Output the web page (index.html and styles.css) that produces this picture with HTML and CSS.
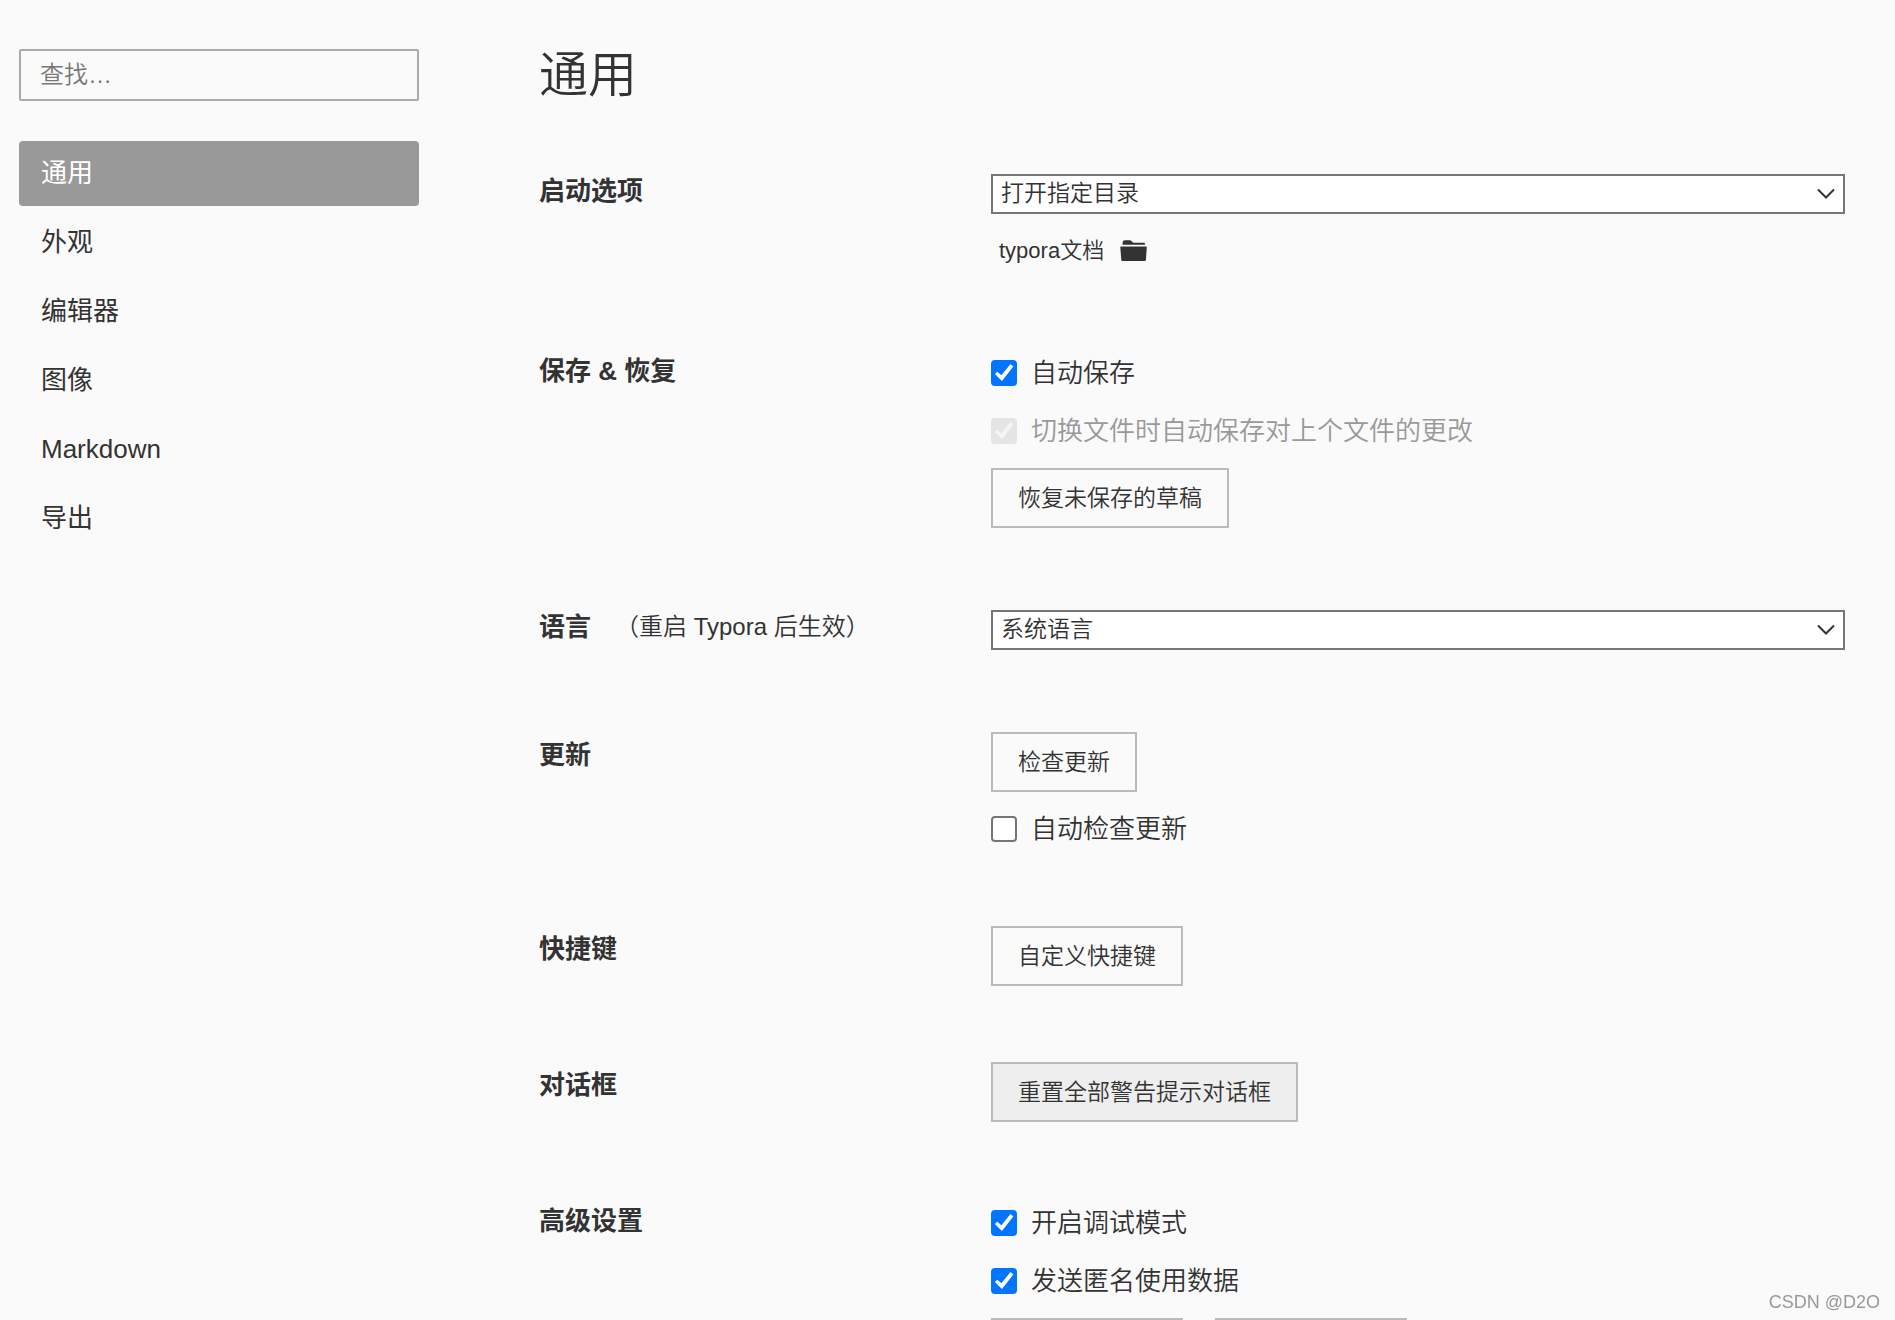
FILE: index.html
```html
<!DOCTYPE html>
<html lang="zh-CN">
<head>
<meta charset="utf-8">
<meta name="viewport" content="width=device-width, initial-scale=1">
<title>通用</title>
<link rel="stylesheet" href="styles.css">
</head>
<body>
<div class="app">
  <aside class="sidebar">
    <input class="search" type="search" placeholder="查找…" aria-label="查找">
    <nav class="nav">
      <a class="nav-item active" href="#general" aria-current="page">通用</a>
      <a class="nav-item" href="#appearance">外观</a>
      <a class="nav-item" href="#editor">编辑器</a>
      <a class="nav-item" href="#image">图像</a>
      <a class="nav-item" href="#markdown">Markdown</a>
      <a class="nav-item" href="#export">导出</a>
    </nav>
  </aside>
  <main class="content" id="general">
    <h1 class="title">通用</h1>

    <section class="row">
      <h2 class="label"><label for="launch">启动选项</label></h2>
      <div class="controls">
        <div class="select-box">
          <select class="select" id="launch"><option>打开指定目录</option></select>
          <svg class="chevron" viewBox="0 0 18 11" aria-hidden="true"><path d="M1 1.5l8 8 8-8"/></svg>
        </div>
        <div class="folder">
          <span>typora文档</span>
          <button class="folder-button" type="button" aria-label="选择目录">
            <svg class="folder-icon" viewBox="0 0 27 21" aria-hidden="true"><path d="M2.600 4.800V2.400C2.800.9 3.600.2 5 .2h4.200c1.200 0 2 .4 2.700 1.200.7.900 1.400 1.400 2.600 1.400h8.800c1.200 0 1.800.6 1.800 2zM1 6.500h25c.5 0 .8.3.8.8l-.9 12.700c-.1.600-.4.900-1 .9H2.300c-.6 0-.9-.3-1-.9L.3 7.300c0-.5.2-.8.7-.8z"/></svg>
          </button>
        </div>
      </div>
    </section>

    <section class="row">
      <h2 class="label">保存 &amp; 恢复</h2>
      <div class="controls">
        <label class="check"><input class="box" type="checkbox" checked>自动保存</label>
        <label class="check disabled"><input class="box" type="checkbox" checked disabled>切换文件时自动保存对上个文件的更改</label>
        <div class="buttons"><button class="button" type="button">恢复未保存的草稿</button></div>
      </div>
    </section>

    <section class="row">
      <h2 class="label"><label for="language">语言</label><span class="note">（重启 Typora 后生效）</span></h2>
      <div class="controls">
        <div class="select-box">
          <select class="select" id="language"><option>系统语言</option></select>
          <svg class="chevron" viewBox="0 0 18 11" aria-hidden="true"><path d="M1 1.5l8 8 8-8"/></svg>
        </div>
      </div>
    </section>

    <section class="row">
      <h2 class="label">更新</h2>
      <div class="controls">
        <div class="buttons"><button class="button" type="button">检查更新</button></div>
        <label class="check"><input class="box" type="checkbox">自动检查更新</label>
      </div>
    </section>

    <section class="row">
      <h2 class="label">快捷键</h2>
      <div class="controls">
        <div class="buttons"><button class="button" type="button">自定义快捷键</button></div>
      </div>
    </section>

    <section class="row">
      <h2 class="label">对话框</h2>
      <div class="controls">
        <div class="buttons"><button class="button pressed" type="button">重置全部警告提示对话框</button></div>
      </div>
    </section>

    <section class="row">
      <h2 class="label">高级设置</h2>
      <div class="controls">
        <label class="check"><input class="box" type="checkbox" checked>开启调试模式</label>
        <label class="check"><input class="box" type="checkbox" checked>发送匿名使用数据</label>
        <div class="buttons">
          <button class="button wide" type="button" aria-label="打开高级设置"></button>
          <button class="button wide" type="button" aria-label="重置高级设置"></button>
        </div>
      </div>
    </section>
  </main>
</div>
<div class="watermark">CSDN @D2O</div>
</body>
</html>
```

FILE: styles.css
```css
* {
  box-sizing: border-box;
}

body {
  margin: 0;
  background: #fafafa;
  color: #333;
  font-family: "Liberation Sans", "Noto Sans CJK SC", sans-serif;
  font-size: 26px;
  line-height: 38px;
}

input,
select,
button {
  font-family: inherit;
  color: inherit;
}

.app {
  display: flex;
  height: 100vh;
  overflow: hidden;
}

/* Sidebar */
.sidebar {
  flex: none;
  width: 419px;
  padding: 49px 0 0 19px;
}

.search {
  display: block;
  width: 100%;
  height: 52px;
  padding: 0 19px;
  border: 2px solid #aaa;
  border-radius: 2px;
  background: transparent;
  font-size: 24px;
  font-weight: 350;
  appearance: none;
}

.search::placeholder {
  color: #777;
}

.nav {
  display: flex;
  flex-direction: column;
  gap: 4px;
  margin-top: 40px;
}

.nav-item {
  padding: 13px 22px 14px;
  border-radius: 4px;
  color: inherit;
  text-decoration: none;
}

.nav-item.active {
  background: #999;
  color: #fff;
}

/* Settings */
.content {
  flex: 1;
  min-width: 0;
  padding: 40px 50px 40px 120px;
  overflow-y: auto;
  scrollbar-width: none;
}

.title {
  margin: 0 0 54px;
  font-size: 49px;
  font-weight: 350;
  line-height: 70px;
}

.row {
  display: grid;
  grid-template-columns: 452px 1fr;
  margin-bottom: 64px;
}

.label {
  display: flex;
  align-self: start;
  gap: 24px;
  margin: 0;
  padding-top: 8px;
  font-size: 26px;
  font-weight: 700;
}

.note {
  font-size: 24px;
  font-weight: 350;
}

.controls {
  font-weight: 350;
}

.select-box {
  position: relative;
  margin: 10px 0 14px;
}

.select {
  display: block;
  width: 100%;
  height: 40px;
  padding: 0 40px 2px 8px;
  border: 2px solid #767676;
  border-radius: 0;
  background: #fff;
  font-size: 23px;
  font-weight: 350;
  appearance: none;
}

.chevron {
  position: absolute;
  top: 14px;
  right: 10px;
  width: 18px;
  height: 11px;
  fill: none;
  stroke: #333;
  stroke-width: 2;
  pointer-events: none;
}

.folder {
  display: flex;
  align-items: center;
  gap: 16px;
  height: 46px;
  margin-bottom: 6px;
  padding-left: 8px;
  font-size: 22px;
}

.folder-button {
  padding: 0 0 2px;
  border: 0;
  background: none;
}

.folder-icon {
  display: block;
  width: 27px;
  height: 21px;
  fill: #333;
}

.check {
  display: flex;
  align-items: center;
  gap: 14px;
  height: 58px;
}

.check.disabled {
  color: #999;
}

.box {
  flex: none;
  width: 26px;
  height: 26px;
  margin: 0;
  border: 2px solid #767676;
  border-radius: 4px;
  background: #fff;
  appearance: none;
}

.box:checked {
  border: 0;
  background: #0075ff;
}

.box:checked::before {
  content: "";
  display: block;
  width: 26px;
  height: 26px;
  background: #fff;
  clip-path: polygon(15% 54%, 24% 45%, 40% 59%, 75% 15%, 86% 25%, 42% 81%);
}

.box:checked:disabled {
  background: #e5e5e5;
}

.box:checked:disabled::before {
  background: #f5f5f5;
}

.buttons {
  display: flex;
  gap: 32px;
  margin: 4px 0 8px;
}

.check + .buttons {
  margin-top: 8px;
}

.button {
  height: 60px;
  padding: 0 25px 4px;
  border: 2px solid #bbb;
  border-radius: 0;
  background: transparent;
  font-size: 23px;
  font-weight: 350;
}

.button.wide {
  min-width: 192px;
}

.button.pressed {
  background: #eee;
}

.watermark {
  position: fixed;
  right: 15px;
  bottom: 4px;
  color: #999;
  font-size: 18px;
  line-height: 28px;
}
```
